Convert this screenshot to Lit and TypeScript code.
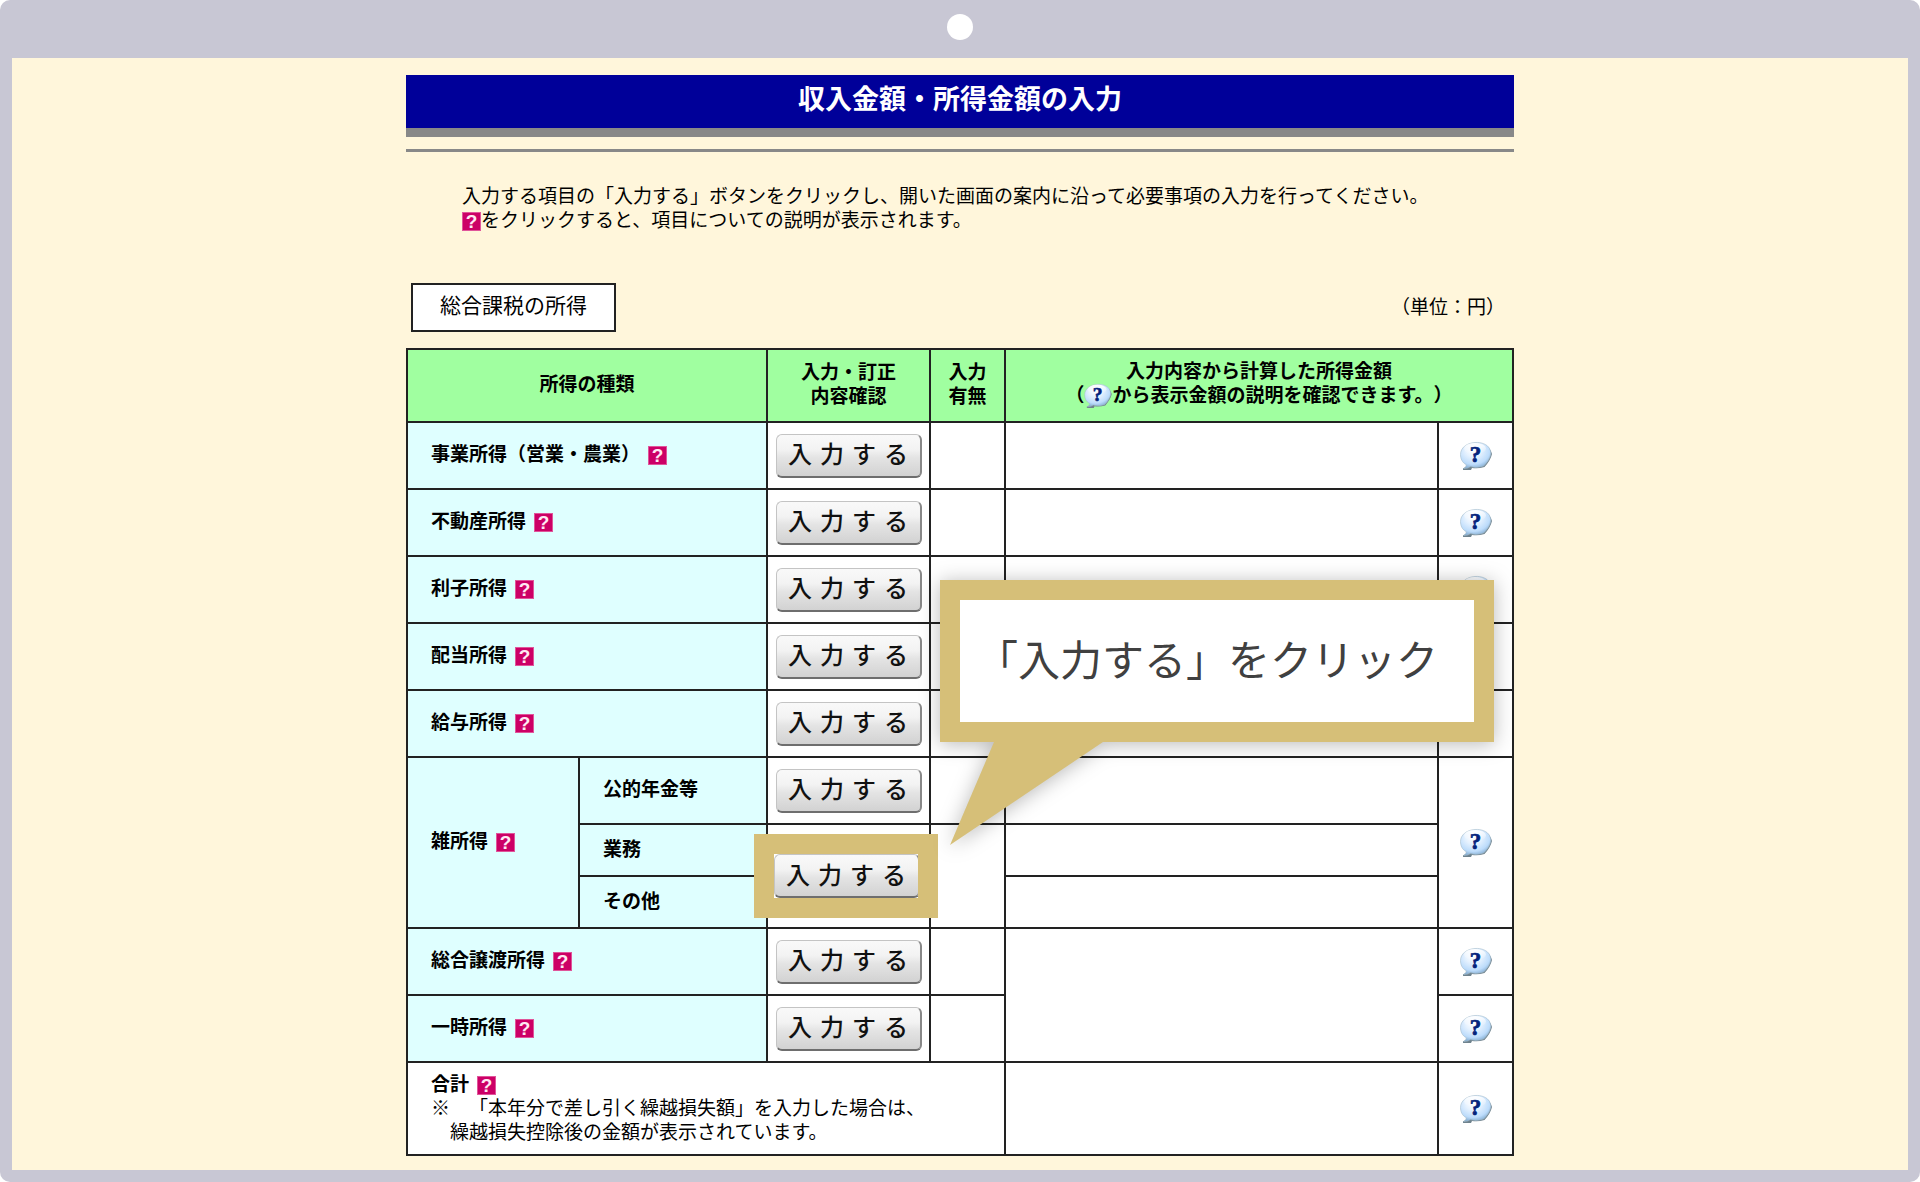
import { LitElement, html, css, nothing } from "lit";
import { customElement, property } from "lit/decorators.js";

/** Small magenta square that opens the description of an item. */
@customElement("item-help")
class ItemHelp extends LitElement {
  @property() label = "";

  static styles = css`
    :host {
      display: inline-block;
      width: 19px;
      height: 19px;
      vertical-align: -4px;
    }
    .link,
    .icon {
      display: block;
      width: 100%;
      height: 100%;
    }
    .icon {
      overflow: visible;
    }
    .mark {
      font: bold 19px "Liberation Sans", sans-serif;
      fill: #ffe9f3;
    }
  `;

  render() {
    return html`<a class="link" href="#help" aria-label=${`${this.label}の説明`}>
      <svg class="icon" viewBox="0 0 19 19" aria-hidden="true">
        <rect width="19" height="19" fill="#e0559a" />
        <rect x="1" y="1" width="17" height="17" fill="#cc0066" />
        <text class="mark" x="9.5" y="16" text-anchor="middle">?</text>
      </svg>
    </a>`;
  }
}

/** Glossy speech bubble that explains how an amount was worked out. */
@customElement("amount-help")
class AmountHelp extends LitElement {
  @property() label = "";

  static styles = css`
    :host {
      display: inline-block;
      width: 32px;
      height: 28px;
      vertical-align: middle;
    }
    .link,
    .icon {
      display: block;
      width: 100%;
      height: 100%;
    }
    .icon {
      overflow: visible;
    }
    .mark {
      font: bold 23px "Liberation Serif", serif;
      fill: #04237c;
      stroke: #04237c;
      stroke-width: 0.7px;
    }
  `;

  render() {
    return html`<a class="link" href="#amount" aria-label=${`${this.label}の表示金額の説明`}>
      <svg class="icon" viewBox="0 0 32 28" aria-hidden="true">
        <defs>
          <radialGradient id="ball" cx="0.42" cy="0.3" r="0.72">
            <stop offset="0" stop-color="#ffffff" />
            <stop offset="0.35" stop-color="#e6f2ff" />
            <stop offset="0.75" stop-color="#bddcfb" />
            <stop offset="1" stop-color="#7fa9cf" />
          </radialGradient>
          <linearGradient id="gloss" x1="0" y1="0" x2="0" y2="1">
            <stop offset="0" stop-color="#ffffff" stop-opacity="0.95" />
            <stop offset="1" stop-color="#ffffff" stop-opacity="0" />
          </linearGradient>
        </defs>
        <path
          d="M25 3 C29.500 5.500 31 8.500 32 12 C31 16.500 28.500 20.500 24.500 25 Q18 27 12 26 L11 28 H3 V26.300 L8 24.500 Z"
          fill="#6f828d"
        />
        <path
          d="M15 0.500 C21.500 0 27.500 2.500 29.500 6.500 C30.500 8.500 30.800 10 30.900 12 C30 16.500 27.500 20 24 23.800 C19 25.800 14 25.800 10.500 24.600 Q8 26.600 3.500 26.600 Q6.500 25 6.300 22.800 C2 20.500 0.500 16.500 0.500 12.500 C0.500 6 6.500 1 15 0.500 Z"
          fill="url(#ball)"
          stroke="#a4bccb"
          stroke-width="0.6"
        />
        <ellipse cx="15" cy="6.500" rx="11" ry="5.500" fill="url(#gloss)" />
        <text class="mark" x="15.500" y="20" text-anchor="middle">?</text>
      </svg>
    </a>`;
  }
}

/** Grey bevelled push button with widely set characters. */
@customElement("entry-button")
class EntryButton extends LitElement {
  @property() label = "";

  static styles = css`
    :host {
      display: block;
      width: 146px;
    }
    .button {
      box-sizing: border-box;
      display: flex;
      align-items: center;
      justify-content: center;
      gap: 8px;
      width: 100%;
      height: 44px;
      margin: 0;
      padding: 0 0 4px 0;
      border: 1px solid #c4c4c4;
      border-right: 2px solid #888;
      border-bottom: 2px solid #6e6e6e;
      border-radius: 6px;
      background: linear-gradient(#f9f9f9 0%, #f3f3f3 35%, #e4e4e4 55%, #d2d2d2 100%);
      color: #111;
      font: 500 24px/36px "Noto Sans CJK JP", sans-serif;
      cursor: pointer;
    }
  `;

  render() {
    return html`<button class="button" type="button" aria-label=${`${this.label}を入力する`}>
      ${[..."入力する"].map((c) => html`<span>${c}</span>`)}
    </button>`;
  }
}

@customElement("app-root")
class AppRoot extends LitElement {
  static styles = css`
    :host {
      display: block;
      background: #fff;
      color: #000;
      font-family: "Noto Sans CJK JP", sans-serif;
      font-size: 19px;
      line-height: 24px;
      text-spacing-trim: space-all;
    }
    .window {
      box-sizing: border-box;
      display: flex;
      flex-direction: column;
      min-height: 100vh;
      padding: 0 12px 12px;
      border-radius: 10px;
      background: #c8c7d4;
    }
    .bar {
      display: flex;
      align-items: center;
      justify-content: center;
      height: 54px;
      padding-bottom: 4px;
    }
    .camera {
      width: 26px;
      height: 26px;
      border-radius: 50%;
      background: #fff;
    }
    .screen {
      flex: 1;
      padding: 17px 16px 14px;
      background: #fff6db;
    }
    .content {
      max-width: 1108px;
      margin: 0 auto;
    }
    .title {
      margin: 0;
      padding: 3px 0 10px;
      border-bottom: 9px solid #888;
      background: #000099;
      color: #fff;
      font-size: 27px;
      line-height: 40px;
      text-align: center;
    }
    .rule {
      height: 3px;
      margin: 12px 0 0;
      border: 0;
      background: #888;
    }
    .intro {
      margin: 31px 56px 0;
    }
    .section {
      display: flex;
      align-items: center;
      justify-content: space-between;
      margin: 52px 9px 16px 5px;
    }
    .heading {
      margin: 0;
      padding: 7px 27px 14px;
      border: 2px solid #222;
      background: #fff;
      font-size: 21px;
      font-weight: 400;
      line-height: 24px;
    }
    .unit {
      padding-bottom: 4px;
    }
    .board {
      position: relative;
    }
    .table {
      width: 100%;
      border-collapse: collapse;
      table-layout: fixed;
      background: #fff;
    }
    .col-group {
      width: 172px;
    }
    .col-item {
      width: 188px;
    }
    .col-entry {
      width: 163px;
    }
    .col-small {
      width: 75px;
    }
    .cell {
      box-sizing: border-box;
      padding: 0 0 5px;
      border: 2px solid #222;
      text-align: center;
      vertical-align: middle;
    }
    .head {
      height: 73px;
      background: #a0ffa0;
    }
    .item {
      padding-left: 23px;
      background: #dfffff;
      text-align: left;
    }
    .control {
      padding: 0;
    }
    .control entry-button {
      margin: 0 auto;
    }
    .row {
      height: 67px;
    }
    .row-short {
      height: 52px;
    }
    .row-total {
      height: 93px;
    }
    .total {
      padding: 0 0 4px 23px;
      font-weight: 400;
      text-align: left;
    }
    .name {
      margin-right: 8px;
      font-weight: 700;
    }
    .note {
      margin: 0;
    }
    .note-more {
      display: block;
      padding-left: 1em;
    }
    .inline {
      width: 28px;
      height: 24px;
    }
    .marked {
      position: relative;
      width: 150px;
      margin: 0 auto;
    }
    .marked entry-button {
      margin: 0;
    }
    .ring {
      position: absolute;
      inset: -20px -14px -20px -20px;
      border: 20px solid #d6bf78;
      pointer-events: none;
    }
    .callout {
      position: absolute;
      top: 232px;
      right: 20px;
      filter: drop-shadow(0 2px 10px rgba(0, 0, 0, 0.28));
    }
    .message {
      margin: 0;
      padding: 28px 36px 34px 16px;
      border: 20px solid #d6bf78;
      background: #fff;
      color: #404040;
      font-size: 42px;
      line-height: 60px;
      white-space: nowrap;
    }
    .tail {
      position: absolute;
      top: 100%;
      left: 10px;
      display: block;
      width: 153px;
      height: 103px;
    }
  `;

  private help(label: string) {
    return html`<item-help label=${label}></item-help>`;
  }

  private amountCell(label: string, span = 1) {
    return html`<td class="cell control" rowspan=${span}>
      <amount-help label=${label}></amount-help>
    </td>`;
  }

  private entryCell(label: string) {
    return html`<td class="cell control"><entry-button label=${label}></entry-button></td>`;
  }

  private row(label: string, amountSpan = 1) {
    return html`<tr class="row">
      <th class="cell item" scope="row" colspan="2"><span class="name">${label}</span>${this.help(label)}</th>
      ${this.entryCell(label)}
      <td class="cell"></td>
      ${amountSpan ? html`<td class="cell" rowspan=${amountSpan}></td>` : nothing}
      ${this.amountCell(label)}
    </tr>`;
  }

  render() {
    return html`
      <div class="window">
        <div class="bar"><span class="camera"></span></div>
        <main class="screen">
          <div class="content">
            <h1 class="title">収入金額・所得金額の入力</h1>
            <hr class="rule" />
            <p class="intro">
              入力する項目の「入力する」ボタンをクリックし、開いた画面の案内に沿って必要事項の入力を行ってください。<br />${this.help("項目")}をクリックすると、項目についての説明が表示されます。
            </p>
            <div class="section">
              <h2 class="heading">総合課税の所得</h2>
              <span class="unit">（単位：円）</span>
            </div>
            <div class="board">
              <table class="table">
                <colgroup>
                  <col class="col-group" />
                  <col class="col-item" />
                  <col class="col-entry" />
                  <col class="col-small" />
                  <col />
                  <col class="col-small" />
                </colgroup>
                <thead>
                  <tr>
                    <th class="cell head" scope="col" colspan="2">所得の種類</th>
                    <th class="cell head" scope="col">入力・訂正<br />内容確認</th>
                    <th class="cell head" scope="col">入力<br />有無</th>
                    <th class="cell head" scope="col" colspan="2">
                      入力内容から計算した所得金額<br />（<amount-help class="inline" label="各所得"></amount-help>から表示金額の説明を確認できます。）
                    </th>
                  </tr>
                </thead>
                <tbody>
                  ${["事業所得（営業・農業）", "不動産所得", "利子所得", "配当所得", "給与所得"].map((label) => this.row(label))}
                  <tr class="row">
                    <th class="cell item" scope="rowgroup" rowspan="3">
                      <span class="name">雑所得</span>${this.help("雑所得")}
                    </th>
                    <th class="cell item" scope="row">公的年金等</th>
                    ${this.entryCell("公的年金等")}
                    <td class="cell"></td>
                    <td class="cell"></td>
                    ${this.amountCell("雑所得", 3)}
                  </tr>
                  <tr class="row-short">
                    <th class="cell item" scope="row">業務</th>
                    <td class="cell control" rowspan="2">
                      <div class="marked">
                        <entry-button label="業務・その他"></entry-button>
                        <span class="ring"></span>
                      </div>
                    </td>
                    <td class="cell" rowspan="2"></td>
                    <td class="cell"></td>
                  </tr>
                  <tr class="row-short">
                    <th class="cell item" scope="row">その他</th>
                    <td class="cell"></td>
                  </tr>
                  ${this.row("総合譲渡所得", 2)} ${this.row("一時所得", 0)}
                  <tr class="row-total">
                    <th class="cell total" scope="row" colspan="4">
                      <span class="name">合計</span>${this.help("合計")}
                      <p class="note">
                        ※　「本年分で差し引く繰越損失額」を入力した場合は、<span class="note-more">繰越損失控除後の金額が表示されています。</span>
                      </p>
                    </th>
                    <td class="cell"></td>
                    ${this.amountCell("合計")}
                  </tr>
                </tbody>
              </table>
              <div class="callout" role="note">
                <p class="message">「入力する」をクリック</p>
                <svg class="tail" viewBox="0 0 153 103" aria-hidden="true">
                  <path d="M44 0 H153 L0 103 Z" fill="#d6bf78" />
                </svg>
              </div>
            </div>
          </div>
        </main>
      </div>
    `;
  }
}
